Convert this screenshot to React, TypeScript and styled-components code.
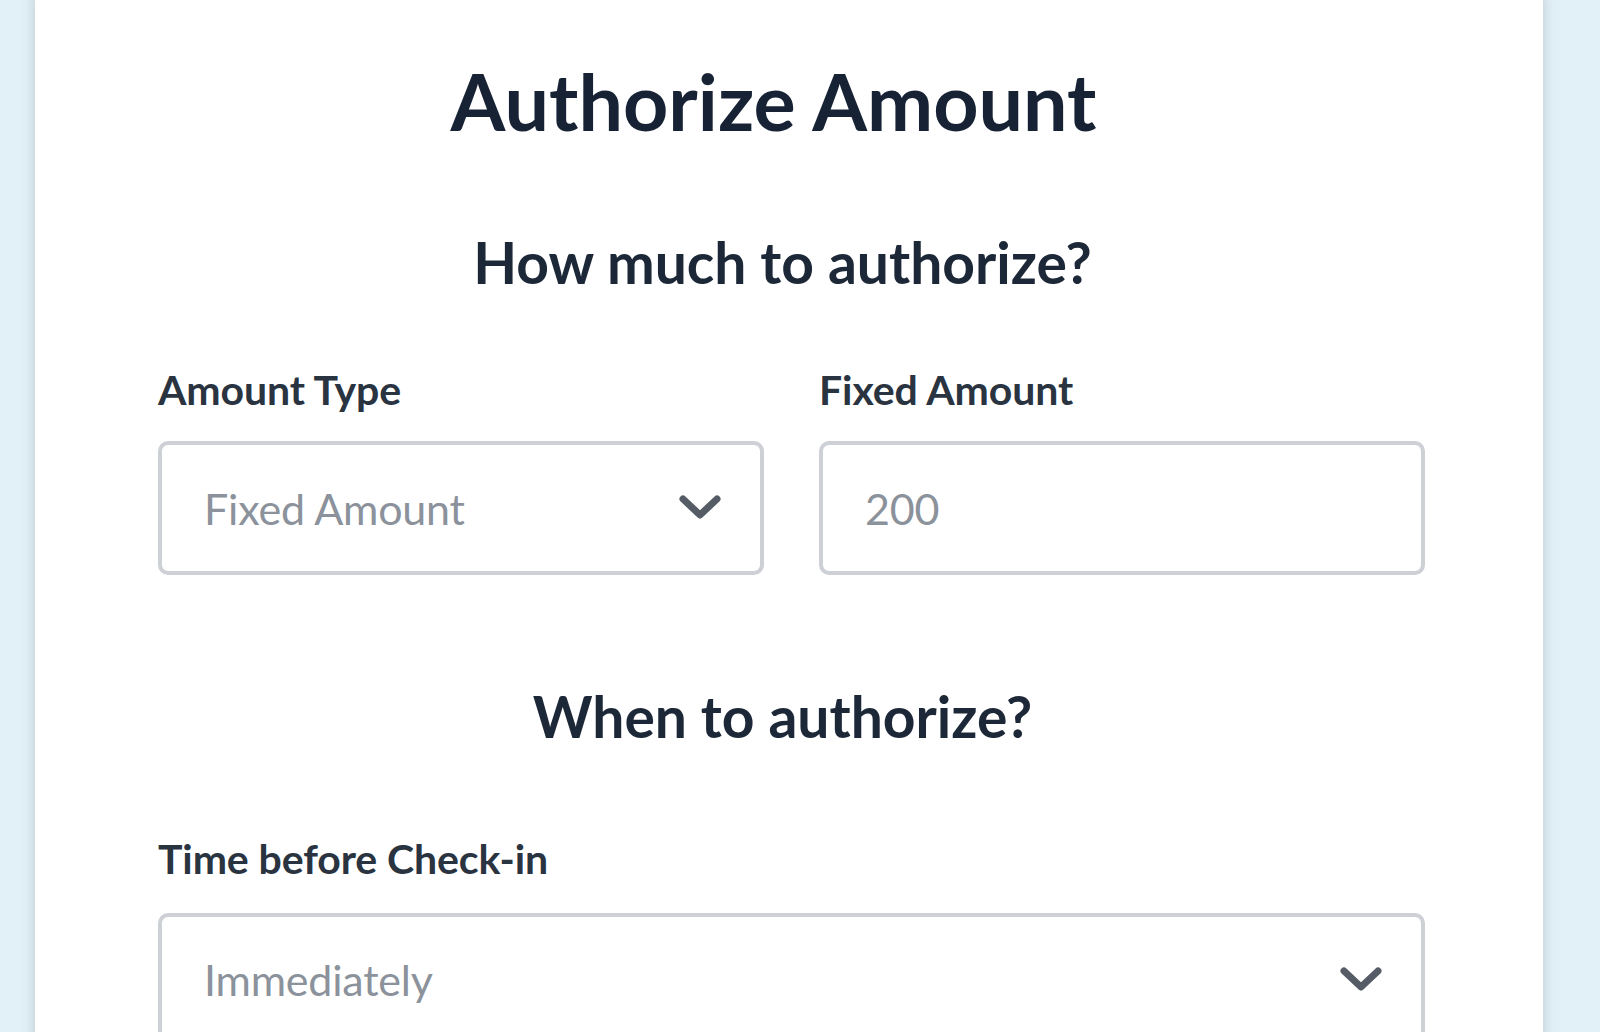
import React from 'react';
import styled, { createGlobalStyle } from 'styled-components';

const GlobalStyle = createGlobalStyle`
  html, body {
    margin: 0;
    padding: 0;
    background: #e2f0f7;
    overflow: hidden;
  }
  body {
    font-family: Lato, "Open Sans", sans-serif;
    color: #1a2535;
  }
`;

const Page = styled.div`
  display: flex;
  min-height: 1032px;
  padding: 0 57px 0 35px;
`;

const Card = styled.div`
  flex: 1;
  background: #ffffff;
  box-shadow: 0 0 8px 4px rgba(180, 190, 198, 0.45);
  padding: 54px 118px 0 123px;
`;

const Title = styled.h1`
  margin: 0;
  padding-right: 36px;
  font-size: 79px;
  font-weight: 700;
  line-height: 1.2;
  text-align: center;
  color: #172234;
`;

const Section = styled.h2<{ $top: number }>`
  margin: ${(p) => p.$top}px 0 0;
  padding-right: 18px;
  font-size: 57px;
  font-weight: 700;
  line-height: 1.2;
  text-align: center;
  color: #1c2737;
`;

const Row = styled.div`
  display: grid;
  grid-template-columns: 1fr 1fr;
  column-gap: 55px;
  margin-top: 69px;
`;

const Field = styled.div<{ $top?: number; $gap?: number }>`
  display: flex;
  flex-direction: column;
  gap: ${(p) => p.$gap ?? 27}px;
  margin-top: ${(p) => p.$top ?? 0}px;
`;

const Label = styled.label`
  font-size: 41px;
  font-weight: 700;
  line-height: 1.2;
  color: #2a3441;
  letter-spacing: -0.1px;
`;

const Box = styled.div`
  display: flex;
  align-items: center;
  justify-content: space-between;
  height: 134px;
  box-sizing: border-box;
  padding: 0 38px 0 42px;
  border: 4px solid #cdd1d5;
  border-radius: 10px;
  background: #ffffff;
`;

const Value = styled.span`
  font-size: 43px;
  font-weight: 400;
  color: #8b929b;
  letter-spacing: -0.2px;
`;

const Chevron = () => (
  <svg width="44" height="28" viewBox="0 0 44 28" fill="none">
    <path
      d="M5 5 L22 21 L39 5"
      stroke="#555c66"
      strokeWidth="7"
      strokeLinecap="round"
      strokeLinejoin="round"
    />
  </svg>
);

export default function App() {
  return (
    <>
      <GlobalStyle />
      <Page>
        <Card>
          <Title>Authorize Amount</Title>
          <Section $top={79}>How much to authorize?</Section>
          <Row>
            <Field>
              <Label>Amount Type</Label>
              <Box>
                <Value>Fixed Amount</Value>
                <Chevron />
              </Box>
            </Field>
            <Field>
              <Label>Fixed Amount</Label>
              <Box>
                <Value>200</Value>
              </Box>
            </Field>
          </Row>
          <Section $top={107}>When to authorize?</Section>
          <Field $top={83} $gap={30}>
            <Label>Time before Check-in</Label>
            <Box>
              <Value>Immediately</Value>
              <Chevron />
            </Box>
          </Field>
        </Card>
      </Page>
    </>
  );
}
